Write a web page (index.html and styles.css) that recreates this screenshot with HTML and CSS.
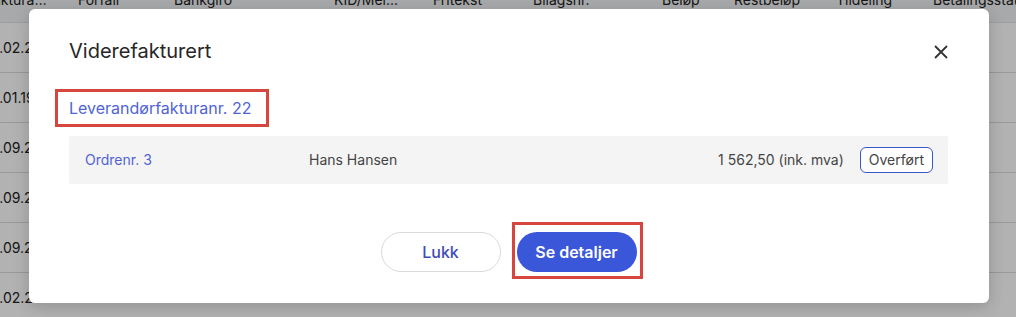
FILE: index.html
```html
<!DOCTYPE html>
<html lang="no">
<head>
<meta charset="utf-8">
<title>Viderefakturert</title>
<link rel="stylesheet" href="styles.css">
</head>
<body>
<div class="page">
  <div class="table">
    <div class="thead">
      <div class="first">Fakturadato</div><div>Forfall</div><div>Bankgiro</div><div>KID/Mel...</div><div>Fritekst</div><div>Bilagsnr.</div><div>Beløp</div><div>Restbeløp</div><div>Tildeling</div><div>Betalingsstatus</div>
    </div>
    <div class="trow"><div class="date">12.02.2024</div></div>
    <div class="trow"><div class="date">10.01.1998</div></div>
    <div class="trow"><div class="date">12.09.2023</div></div>
    <div class="trow"><div class="date">12.09.2023</div></div>
    <div class="trow"><div class="date">12.09.2023</div></div>
    <div class="trow"><div class="date">12.02.2024</div></div>
  </div>
</div>
<div class="overlay"></div>
<div class="modal">
  <div class="modal-head">
    <h2 class="title">Viderefakturert</h2>
    <button class="close" aria-label="Lukk">
      <svg width="14" height="14" viewBox="0 0 14 14"><path d="M1 1L13 13M13 1L1 13" stroke="#333" stroke-width="1.8" fill="none"/></svg>
    </button>
  </div>
  <div class="link-wrap"><a class="link marked">Leverandørfakturanr. 22</a></div>
  <div class="order-row">
    <a class="order-link">Ordrenr. 3</a>
    <span class="name">Hans Hansen</span>
    <span class="amount">1 562,50 (ink. mva)</span>
    <span class="badge">Overført</span>
  </div>
  <div class="actions">
    <button class="btn btn-secondary">Lukk</button>
    <button class="btn btn-primary marked-btn">Se detaljer</button>
  </div>
</div>
</body>
</html>
```
FILE: styles.css
```css
* { box-sizing: border-box; }
html, body { margin: 0; padding: 0; }
body {
  width: 1016px;
  height: 317px;
  overflow: hidden;
  position: relative;
  font-family: Inter, "Noto Sans", sans-serif;
  background: #fff;
  color: #333;
}
.page { width: 1016px; height: 317px; overflow: hidden; }
.table { margin-left: -20px; }
.thead, .trow {
  display: grid;
  grid-template-columns: 98px 96px 160px 99px 100px 129px 72px 102px 97px 200px;
  font-size: 14px;
  line-height: 20px;
}
.thead {
  margin-top: -10px;
  height: 33px;
  background: #f1f2f4;
  border-bottom: 1px solid #e2e2e2;
  color: #222;
  white-space: nowrap;
}
.thead div { overflow: hidden; }
.thead .first {
  padding-left: 5px;
  width: 67px;
  text-overflow: ellipsis;
}
.trow {
  height: 50px;
  border-bottom: 1px solid #dcdcdc;
  align-items: center;
}
.date { padding-left: 5px; color: #222; white-space: nowrap; }
.overlay {
  position: absolute;
  inset: 0;
  background: rgba(0, 0, 0, 0.3);
}
.modal {
  position: absolute;
  left: 29px;
  top: 9px;
  width: 960px;
  background: #fff;
  border-radius: 6px;
  box-shadow: 0 4px 16px rgba(0,0,0,0.18);
  padding: 28px 41px 31px 40px;
  display: flex;
  flex-direction: column;
}
.modal-head {
  display: flex;
  align-items: center;
  justify-content: space-between;
}
.title {
  margin: 0;
  font-size: 20px;
  line-height: 28px;
  font-weight: 400;
  color: #262626;
}
.close {
  border: 0;
  background: none;
  padding: 0;
  width: 14px;
  height: 14px;
  display: flex;
  margin-top: 2px;
}
.link-wrap { margin-top: 31px; display: flex; }
.link {
  font-size: 16px;
  line-height: 24px;
  color: #5064d4;
  position: relative;
}
.marked::after {
  content: "";
  position: absolute;
  left: -14px;
  top: -7px;
  right: -18px;
  bottom: -7px;
  border: 3px solid #d6463f;
}
.order-row {
  margin-top: 16px;
  height: 48px;
  background: #f4f4f4;
  border-radius: 2px;
  display: grid;
  grid-template-columns: 224px 1fr auto auto;
  align-items: center;
  padding: 0 15px 0 16px;
  font-size: 14px;
  line-height: 20px;
}
.order-link { color: #5064d4; }
.name { color: #444; }
.amount { color: #444; margin-right: 16px; }
.badge {
  height: 26px;
  padding: 0 8px;
  border: 1px solid #3d55c8;
  border-radius: 6px;
  display: flex;
  align-items: center;
  color: #444;
  background: #fff;
}
.actions {
  margin-top: 48px;
  display: flex;
  justify-content: center;
  gap: 16px;
}
.btn {
  width: 120px;
  height: 40px;
  border-radius: 20px;
  font-family: Inter, "Noto Sans", sans-serif;
  font-size: 16px;
  font-weight: 500;
  cursor: pointer;
}
.btn-secondary {
  background: #fff;
  border: 1px solid #d9d9d9;
  color: #3e4cb8;
}
.btn-primary {
  background: #3a56d9;
  border: 0;
  color: #fff;
  font-weight: 600;
}
.marked-btn { position: relative; }
.marked-btn::after {
  content: "";
  position: absolute;
  left: -5px;
  top: -10px;
  right: -6px;
  bottom: -7px;
  border: 3px solid #d6463f;
}
```
